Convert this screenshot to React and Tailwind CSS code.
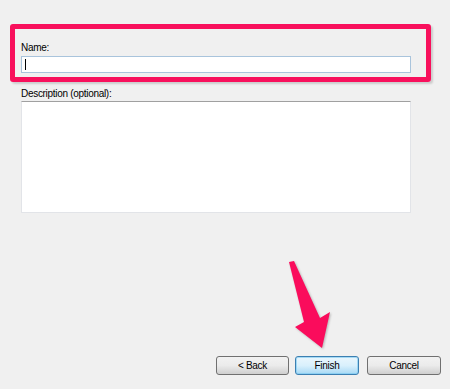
export default function App() {
  const btn =
    'h-[19px] rounded-[3px] border border-[#707070] bg-gradient-to-b from-[#f2f2f2] via-[#ebebeb] to-[#cfcfcf] text-[10px] tracking-[-0.3px] text-black flex items-center justify-center';

  return (
    <div
      className="relative w-[450px] h-[389px] bg-[#f0f0f0] flex flex-col pt-[24px] pl-[10px] pr-[9px] pb-[14px] text-black"
      style={{ fontFamily: '"Liberation Sans", Arial, sans-serif' }}
    >
      {/* Highlighted name field */}
      <div className="w-[421px] h-[58px] border-[5px] border-[#f8105c] rounded-[3px] pt-[13px] pl-[6px] shadow-[2px_2px_2px_rgba(0,0,0,0.15)]">
        <p className="text-[10px] leading-[12px] tracking-[-0.3px]">Name:</p>
        <div className="mt-[2px] w-[390px] h-[17px] bg-white border border-[#a9c4dc] flex items-center pl-[3px]">
          <div className="w-px h-[11px] bg-black" />
        </div>
      </div>

      {/* Description */}
      <div className="pl-[11px]">
        <p className="mt-[6px] text-[10px] leading-[12px] tracking-[-0.3px]">Description (optional):</p>
        <div className="mt-[1px] w-[390px] h-[112px] bg-white border border-[#e2e4e8] border-t-[#a0a0a0]" />
      </div>

      {/* Buttons */}
      <div className="mt-auto flex justify-end gap-[6px]">
        <button className={`${btn} w-[73px]`}>&lt; Back</button>
        <button className="h-[19px] w-[64px] mr-[2px] rounded-[3px] border border-[#3c7fb1] bg-gradient-to-b from-[#eaf6fd] via-[#d9f0fc] to-[#a7d9f5] text-[10px] tracking-[-0.3px] text-black flex items-center justify-center shadow-[inset_0_0_0_1px_rgba(120,200,240,0.6)]">
          Finish
        </button>
        <button className={`${btn} w-[74px]`}>Cancel</button>
      </div>

      {/* Annotation arrow */}
      <svg
        className="absolute left-0 top-0 pointer-events-none"
        width="450"
        height="389"
        viewBox="0 0 450 389"
      >
        <polygon
          points="289,262 294,261 320,318 330,312 322,348 295,327 304,322"
          fill="#fa0c5c"
          style={{ filter: 'drop-shadow(1px 1px 1px rgba(0,0,0,0.25))' }}
        />
      </svg>
    </div>
  );
}
